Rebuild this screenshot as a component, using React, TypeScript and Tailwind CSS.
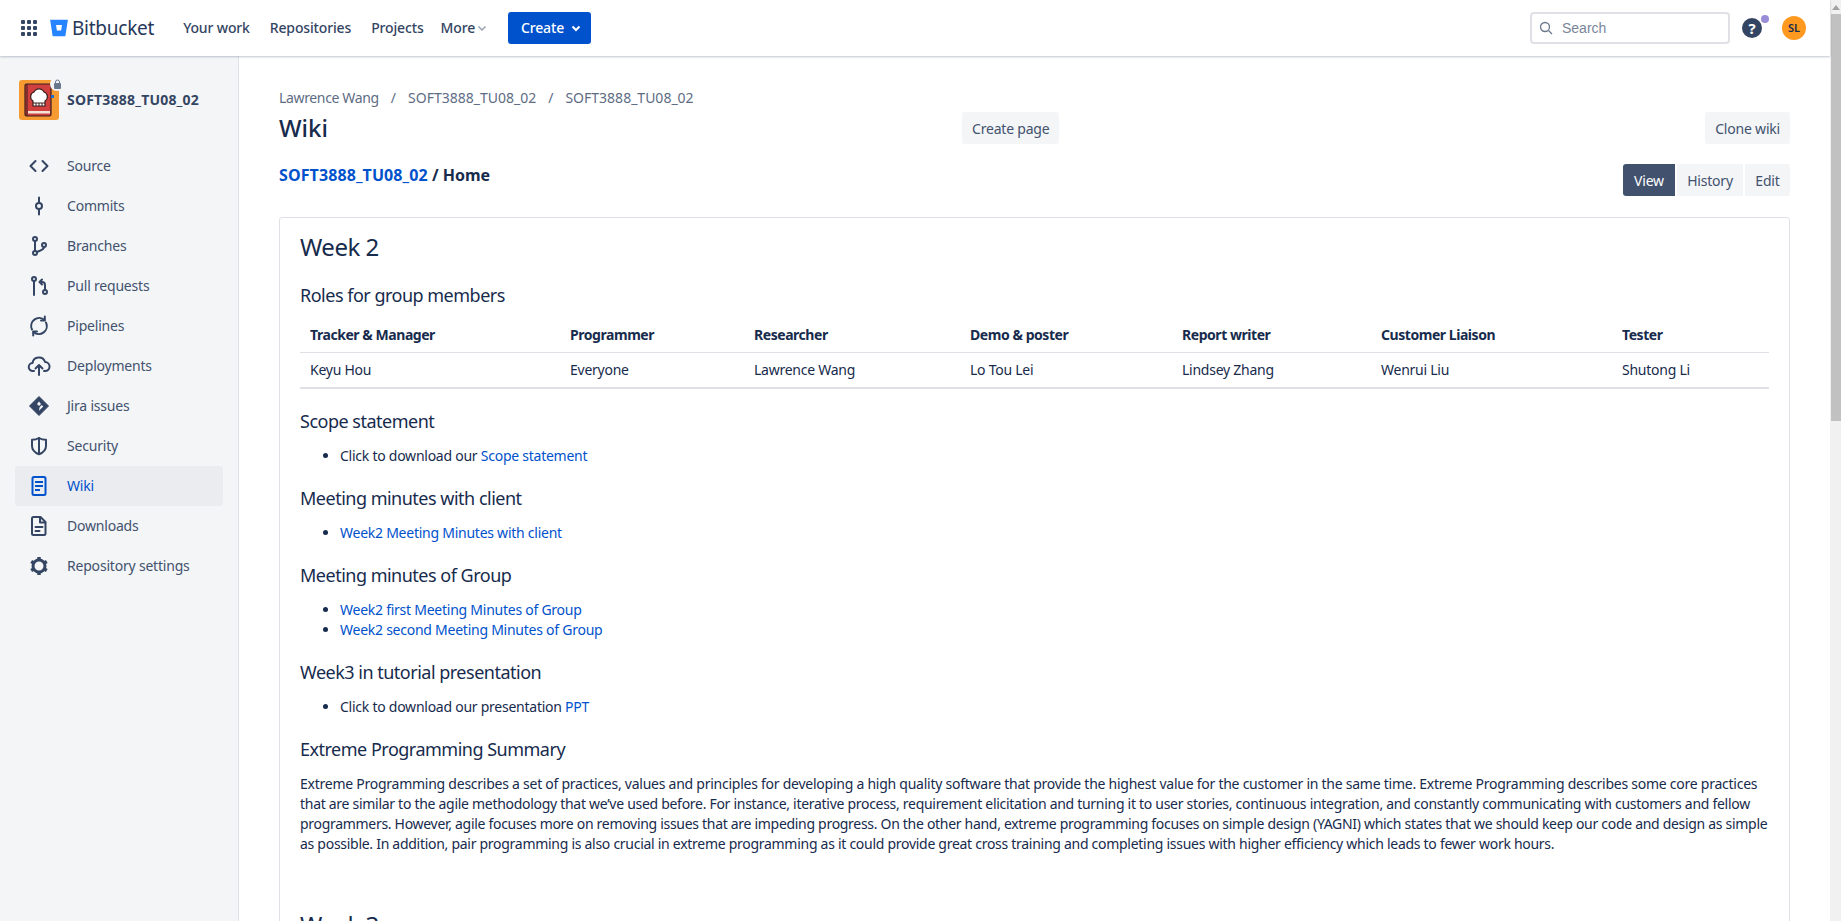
import type { ReactNode } from 'react'

const stroke = { fill: 'none', stroke: 'currentColor', strokeWidth: 2, strokeLinecap: 'round', strokeLinejoin: 'round' } as const

const sidebarItems: { label: string; active?: boolean; icon: ReactNode }[] = [
  { label: 'Source', icon: <g {...stroke}><path d="M8.5 7 3.5 12l5 5" /><path d="m15.5 7 5 5-5 5" /></g> },
  { label: 'Commits', icon: <g {...stroke}><circle cx="12" cy="12" r="3" /><path d="M12 3.5V9M12 15v5.5" /></g> },
  { label: 'Branches', icon: <g {...stroke}><circle cx="8" cy="5" r="2" /><circle cx="8" cy="19" r="2" /><circle cx="17" cy="11" r="2" /><path d="M8 7v10M17 13c0 3-4 3.500-7 5" /></g> },
  { label: 'Pull requests', icon: <g {...stroke}><circle cx="7" cy="5" r="2" /><circle cx="18" cy="18" r="2" /><path d="M7 7v14M18 16v-5c0-2-1-3-3-3M15 5.500 12.500 8l2.500 2.500" /></g> },
  { label: 'Pipelines', icon: <g {...stroke}><path d="M5 15.500A8 8 0 0 1 17.500 6M19 8.500A8 8 0 0 1 6.500 18" /><path d="M17.800 2.500V6.500H14M6.200 21.500v-4H10" /></g> },
  { label: 'Deployments', icon: <g {...stroke}><path d="M7 17H6a4 4 0 0 1-.5-8 6.500 6.500 0 0 1 12.600-1A4.500 4.500 0 0 1 18 17h-1" /><path d="M12 21v-9M8.500 14.500 12 11l3.500 3.500" /></g> },
  { label: 'Jira issues', icon: <g><path fill="currentColor" stroke="currentColor" strokeWidth="1" strokeLinejoin="round" d="M12 2.500 21.500 12 12 21.500 2.500 12z" /><path fill="#f4f5f7" d="m12 7.500 2 2.500-2 2-2-2zM14.500 11l1.800 1.500L12 16.800l.5-3.300z" /></g> },
  { label: 'Security', icon: <g {...stroke}><path d="M12 4c2.500 1.500 5 1.700 7 1.700V12c0 4-3 6.700-7 8.300C8 18.700 5 16 5 12V5.700C7 5.700 9.500 5.500 12 4z" /><path d="M12 4v16" /></g> },
  { label: 'Wiki', active: true, icon: <g><rect x="5.500" y="3" width="13" height="18" rx="1.500" fill="none" stroke="currentColor" strokeWidth="2" /><path d="M8 7h8v2H8zM8 11h8v2H8zM8 15h5v2H8z" fill="currentColor" /></g> },
  { label: 'Downloads', icon: <g {...stroke}><path d="M6.500 3h7l5 5v11.500a1.500 1.500 0 0 1-1.500 1.500H6.500A1.500 1.500 0 0 1 5 19.500v-15A1.500 1.500 0 0 1 6.500 3z" /><path d="M13 3.500V8.500h5M8.500 13h7M8.500 17h4" /></g> },
  { label: 'Repository settings', icon: <g><circle cx="12" cy="12" r="6" fill="none" stroke="currentColor" strokeWidth="3" /><path stroke="currentColor" strokeWidth="3.500" d="M12 3v3M12 18v3M4.200 7.500l2.600 1.500M17.200 15l2.600 1.500M4.200 16.500 6.800 15M17.200 9l2.600-1.500" /></g> },
]

const roles = [
  ['Tracker & Manager', 'Keyu Hou'],
  ['Programmer', 'Everyone'],
  ['Researcher', 'Lawrence Wang'],
  ['Demo & poster', 'Lo Tou Lei'],
  ['Report writer', 'Lindsey Zhang'],
  ['Customer Liaison', 'Wenrui Liu'],
  ['Tester', 'Shutong Li'],
]

function NavLink({ children }: { children: ReactNode }) {
  return <span className="block pb-[2px] text-[14px] font-medium tracking-[-0.15px] text-[#344563]">{children}</span>
}

function Header() {
  return (
    <header className="relative z-10 flex h-14 shrink-0 items-center bg-white pl-5 pr-6 shadow-[0_1px_2px_rgba(9,30,66,0.25)]">
      <svg width="18" height="18" viewBox="0 0 18 18" className="text-[#344563]" fill="currentColor">
        <rect x="1" y="1" width="4" height="4" rx="1" /><rect x="7" y="1" width="4" height="4" rx="1" /><rect x="13" y="1" width="4" height="4" rx="1" />
        <rect x="1" y="7" width="4" height="4" rx="1" /><rect x="7" y="7" width="4" height="4" rx="1" /><rect x="13" y="7" width="4" height="4" rx="1" />
        <rect x="1" y="13" width="4" height="4" rx="1" /><rect x="7" y="13" width="4" height="4" rx="1" /><rect x="13" y="13" width="4" height="4" rx="1" />
      </svg>
      <svg width="20" height="20" viewBox="0 0 18 18" className="ml-[11px]">
        <path fill="#2684ff" d="M1 1.500h16l-2.300 15H3.300z" />
        <path fill="#fff" d="M6.300 6.200h5.400l-.8 5H7.100z" />
      </svg>
      <span className="ml-[3px] text-[19px] tracking-[-0.25px] text-[#253858]">Bitbucket</span>
      <nav className="ml-[29px] flex items-center">
        <NavLink>Your work</NavLink>
        <span className="ml-5"><NavLink>Repositories</NavLink></span>
        <span className="ml-5"><NavLink>Projects</NavLink></span>
        <span className="ml-[17px] flex items-center">
          <NavLink>More</NavLink>
          <svg width="12" height="12" viewBox="0 0 12 12" className="ml-px text-[#97a0af]"><path d="m2.500 4.500 3.500 3.500 3.500-3.500" fill="none" stroke="currentColor" strokeWidth="1.500" /></svg>
        </span>
        <button className="ml-5 flex h-8 w-[83px] items-center justify-center gap-[6px] rounded-[3px] bg-[#0052cc] pl-1 text-[14px] font-medium tracking-[-0.15px] text-white">
          <span className="pb-[2px]">Create</span>
          <svg width="12" height="12" viewBox="0 0 12 12"><path d="m2.500 4.500 3.500 3.500 3.500-3.500" fill="none" stroke="currentColor" strokeWidth="2" /></svg>
        </button>
      </nav>
      <div className="ml-auto flex h-8 w-[200px] items-center rounded-[4px] border-2 border-[#dfe1e6] bg-white pl-[7px]">
        <svg width="14" height="14" viewBox="0 0 14 14" className="text-[#6b778c]"><circle cx="6" cy="6" r="4.500" fill="none" stroke="currentColor" strokeWidth="1.300" /><path d="m9.500 9.500 3.500 3.500" stroke="currentColor" strokeWidth="1.300" /></svg>
        <span className="ml-[9px] font-['Liberation_Sans',sans-serif] text-[14px] text-[#7a869a]">Search</span>
      </div>
      <div className="relative ml-3 h-5 w-5 rounded-full bg-[#344563] text-center text-[15px] font-bold leading-5 text-white">
        ?
        <span className="absolute -right-[7px] -top-[3px] h-2 w-2 rounded-full bg-[#998dd9]" />
      </div>
      <div className="ml-5 flex h-6 w-6 items-center justify-center rounded-full bg-[#ff991f] text-[11px] font-semibold text-[#172b4d]">SL</div>
    </header>
  )
}

function Sidebar() {
  return (
    <aside className="w-[239px] shrink-0 border-r border-[#dfe1e6] bg-[#f4f5f7] px-[15px] pt-6">
      <div className="flex items-center pl-1">
        <div className="relative h-10 w-10 rounded-[3px] bg-[#f79a32]">
          <svg viewBox="0 0 40 40" className="h-10 w-10">
            <rect x="6" y="4" width="26" height="32" rx="1.500" fill="#d13f3f" stroke="#3a1f1f" strokeWidth="1.200" />
            <path d="M8 4v32" stroke="#3a1f1f" strokeWidth="1" />
            <rect x="9" y="31" width="22" height="2.500" fill="#f3e6d8" />
            <path d="M14 21a5 5 0 0 1 1-9 5.500 5.500 0 0 1 10 0 5 5 0 0 1 1 9v5H14z" fill="#fff" stroke="#3a1f1f" strokeWidth="1.200" />
            <path d="M14 23h12M17 23v3M20 23v3M23 23v3" stroke="#3a1f1f" strokeWidth="1" />
            <rect x="32" y="15" width="3" height="3" fill="#1e6fc8" />
          </svg>
          <span className="absolute -right-[5px] -top-[3px] flex h-[14px] w-[14px] items-center justify-center rounded-full bg-[#f4f5f7]">
            <svg width="9" height="10" viewBox="0 0 9 10" className="text-[#6b778c]"><rect x="1" y="4" width="7" height="6" rx="1" fill="currentColor" /><path d="M2.500 4.500V3a2 2 0 0 1 4 0v1.500" fill="none" stroke="currentColor" strokeWidth="1" /></svg>
          </span>
        </div>
        <span className="mb-[2px] ml-2 text-[14px] font-bold tracking-[0.2px] text-[#344563]">SOFT3888_TU08_02</span>
      </div>
      <ul className="mt-[26px]">
        {sidebarItems.map((item) => (
          <li key={item.label} className={item.active ? 'flex h-10 items-center rounded-[3px] bg-[#ebecf0] text-[#0052cc]' : 'flex h-10 items-center text-[#42526e]'}>
            <svg width="24" height="24" viewBox="0 0 24 24" className={item.active ? 'ml-3 shrink-0 text-[#0052cc]' : 'ml-3 shrink-0 text-[#344563]'}>{item.icon}</svg>
            <span className="mb-[2px] ml-4 text-[14px] tracking-[-0.2px]">{item.label}</span>
          </li>
        ))}
      </ul>
    </aside>
  )
}

function Section({ title, children }: { title: string; children: ReactNode }) {
  return (
    <section>
      <h3 className="text-[18px] leading-6 tracking-[-0.5px] text-[#172b4d]">{title}</h3>
      {children}
    </section>
  )
}

function A({ children }: { children: ReactNode }) {
  return <a className="text-[#0052cc]">{children}</a>
}

function Links({ children }: { children: ReactNode }) {
  return <ul className="mb-[11px] mt-[13px] list-disc pl-10 text-[14px] leading-5 tracking-[-0.25px] text-[#172b4d]">{children}</ul>
}

function Content() {
  return (
    <main className="min-w-0 flex-1 overflow-hidden bg-white pl-10 pr-10 pt-8">
      <div className="flex items-center text-[14px] leading-5 text-[#5e6c84]">
        <span className="tracking-[-0.35px]">Lawrence Wang</span>
        <span className="mx-3">/</span>
        <span>SOFT3888_TU08_02</span>
        <span className="mx-3">/</span>
        <span>SOFT3888_TU08_02</span>
      </div>
      <div className="mt-1 flex h-8 items-center">
        <h1 className="w-[683px] text-[24px] font-medium text-[#172b4d]">Wiki</h1>
        <button className="h-8 rounded-[3px] bg-[#f4f5f7] px-[10px] text-[14px] tracking-[-0.2px] text-[#42526e]">Create page</button>
        <button className="ml-auto h-8 rounded-[3px] bg-[#f4f5f7] px-[10px] text-[14px] tracking-[-0.2px] text-[#42526e]">Clone wiki</button>
      </div>
      <div className="mt-5 flex items-start justify-between">
        <div className="pt-px text-[16px] font-bold leading-5 text-[#172b4d]"><a className="tracking-[0.1px] text-[#0052cc]">SOFT3888_TU08_02</a> / Home</div>
        <div className="flex gap-[2px] text-[14px] tracking-[-0.2px]">
          <button className="h-8 w-[52px] rounded-l-[3px] bg-[#42526e] text-white">View</button>
          <button className="h-8 w-[66px] bg-[#f4f5f7] text-[#42526e]">History</button>
          <button className="h-8 w-[45px] rounded-r-[3px] bg-[#f4f5f7] text-[#42526e]">Edit</button>
        </div>
      </div>
      <article className="mt-[21px] rounded-[3px] border border-[#dfe1e6] px-5 pb-10 pt-[13px] text-[#172b4d]">
        <h2 className="text-[24px] leading-8 tracking-[-0.5px]">Week 2</h2>
        <h3 className="mt-5 text-[18px] leading-6 tracking-[-0.5px]">Roles for group members</h3>
        <table className="mt-[11px] w-full table-fixed border-b-2 border-[#dfe1e6] text-[14px]">
          <colgroup>
            <col className="w-[260px]" /><col className="w-[184px]" /><col className="w-[216px]" /><col className="w-[212px]" /><col className="w-[199px]" /><col className="w-[241px]" /><col />
          </colgroup>
          <thead>
            <tr className="border-b border-[#dfe1e6]">
              {roles.map(([head]) => <th key={head} className="px-[10px] py-[7px] text-left font-bold leading-5 tracking-[-0.45px]">{head}</th>)}
            </tr>
          </thead>
          <tbody>
            <tr>
              {roles.map(([head, name]) => <td key={head} className="px-[10px] py-[7px] leading-5 tracking-[-0.25px]">{name}</td>)}
            </tr>
          </tbody>
        </table>
        <div className="mt-5">
          <Section title="Scope statement"><Links><li>Click to download our <A>Scope statement</A></li></Links></Section>
          <div className="mt-5"><Section title="Meeting minutes with client"><Links><li><A>Week2 Meeting Minutes with client</A></li></Links></Section></div>
          <div className="mt-5"><Section title="Meeting minutes of Group"><Links><li><A>Week2 first Meeting Minutes of Group</A></li><li><A>Week2 second Meeting Minutes of Group</A></li></Links></Section></div>
          <div className="mt-5"><Section title="Week3 in tutorial presentation"><Links><li>Click to download our presentation <A>PPT</A></li></Links></Section></div>
          <div className="mt-5">
            <Section title="Extreme Programming Summary">
              <p className="mt-[13px] whitespace-nowrap text-[14px] leading-5">
                <span className="block tracking-[-0.25px]">Extreme Programming describes a set of practices, values and principles for developing a high quality software that provide the highest value for the customer in the same time. Extreme Programming describes some core practices</span>
                <span className="block tracking-[-0.29px]">that are similar to the agile methodology that we’ve used before. For instance, iterative process, requirement elicitation and turning it to user stories, continuous integration, and constantly communicating with customers and fellow</span>
                <span className="block tracking-[-0.3px]">programmers. However, agile focuses more on removing issues that are impeding progress. On the other hand, extreme programming focuses on simple design (YAGNI) which states that we should keep our code and design as simple</span>
                <span className="block tracking-[-0.28px]">as possible. In addition, pair programming is also crucial in extreme programming as it could provide great cross training and completing issues with higher efficiency which leads to fewer work hours.</span>
              </p>
            </Section>
          </div>
        </div>
        <h2 className="mt-[55px] text-[24px] leading-8 tracking-[-0.5px]">Week 3</h2>
      </article>
    </main>
  )
}

function Scrollbar() {
  return (
    <div className="flex w-[11px] shrink-0 flex-col bg-[#f1f1f1]">
      <div className="flex h-[14px] items-center justify-center">
        <div className="h-0 w-0 border-x-[4px] border-b-[5px] border-x-transparent border-b-[#a3a3a3]" />
      </div>
      <div className="ml-px h-[407px] bg-[#c1c1c1]" />
    </div>
  )
}

export default function App() {
  return (
    <div className="flex h-[921px] overflow-hidden font-['Noto_Sans',sans-serif]">
      <div className="flex min-w-0 flex-1 flex-col">
        <Header />
        <div className="flex min-h-0 flex-1">
          <Sidebar />
          <Content />
        </div>
      </div>
      <Scrollbar />
    </div>
  )
}
